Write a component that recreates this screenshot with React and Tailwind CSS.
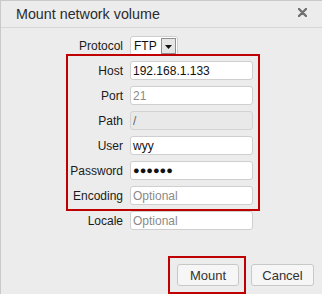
import React from "react";

const font = { fontFamily: '"Liberation Sans", Arial, sans-serif' };

function Row({ label, children, className = "" }) {
  return (
    <div className={"flex items-center " + className}>
      <div className="w-[123px] pr-[1px] text-right text-[12px] text-[#1a1a1a] leading-none">{label}</div>
      <div className="ml-[6px]">{children}</div>
    </div>
  );
}

function Input({ value, placeholder, disabled, password }) {
  return (
    <div
      className={
        "w-[123px] h-[19px] rounded-[3px] border flex items-center px-[2px] text-[12px] leading-none " +
        (disabled ? "bg-[#e9e9e9] border-[#d3d3d3] text-[#666]" : "bg-white border-[#cfcfcf] text-[#111]")
      }
    >
      {value ? (
        <span className={password ? "tracking-[0px] text-[11px]" : ""}>{value}</span>
      ) : (
        <span className="text-[#8a8a8a]">{placeholder}</span>
      )}
    </div>
  );
}

export default function App() {
  return (
    <div style={font} className="relative w-[322px] h-[294px] bg-[#ececec] border-l border-t border-[#c9c9c9] overflow-hidden">
      <div className="h-[27px] border-b border-[#d6d6d6] flex items-center justify-between pl-[15px] pr-[15px]">
        <span className="text-[14.3px] text-[#2b2b2b] leading-none mt-[1px]">Mount network volume</span>
        <svg width="9" height="9" viewBox="0 0 9 9" className="mb-[4px]">
          <path d="M1 1 L8 8 M8 1 L1 8" stroke="#707070" strokeWidth="2.4" strokeLinecap="round" />
        </svg>
      </div>

      <div className="flex flex-col pt-[8px]">
        <Row label="Protocol">
          <div className="w-[48px] h-[20px] rounded-[3px] border border-[#cfcfcf] bg-white flex items-center justify-between pl-[3px] pr-[1px]">
            <span className="text-[12px] text-[#111] leading-none">FTP</span>
            <div className="w-[15px] h-[16px] border border-[#8f8f8f] bg-[#e6e6e6] flex items-center justify-center">
              <svg width="7" height="4" viewBox="0 0 7 4" className="mt-[2px]">
                <path d="M0 0 L7 0 L3.5 4 Z" fill="#111" />
              </svg>
            </div>
          </div>
        </Row>
        <div className="flex flex-col gap-[6px] mt-[5px]">
          <Row label="Host"><Input value="192.168.1.133" /></Row>
          <Row label="Port"><Input placeholder="21" /></Row>
          <Row label="Path"><Input disabled value="/" /></Row>
          <Row label="User"><Input value="wyy" /></Row>
          <Row label="Password"><Input value="●●●●●●" password /></Row>
          <Row label="Encoding"><Input placeholder="Optional" /></Row>
          <Row label="Locale"><Input placeholder="Optional" /></Row>
        </div>
      </div>

      <div className="absolute right-[8px] bottom-[8px] flex gap-[12px]">
        <button className="w-[62px] h-[22px] rounded-[3px] border border-[#c8c8c8] bg-[#f6f6f6] text-[13px] text-[#333] leading-none">Mount</button>
        <button className="w-[63px] h-[22px] rounded-[3px] border border-[#c8c8c8] bg-[#f6f6f6] text-[13px] text-[#333] leading-none">Cancel</button>
      </div>

      <div className="absolute left-[65px] top-[53px] w-[194px] h-[157px] border-2 border-[#c00000] pointer-events-none" />
      <div className="absolute left-[167px] top-[255px] w-[78px] h-[38px] border-2 border-[#c00000] pointer-events-none" />
    </div>
  );
}
